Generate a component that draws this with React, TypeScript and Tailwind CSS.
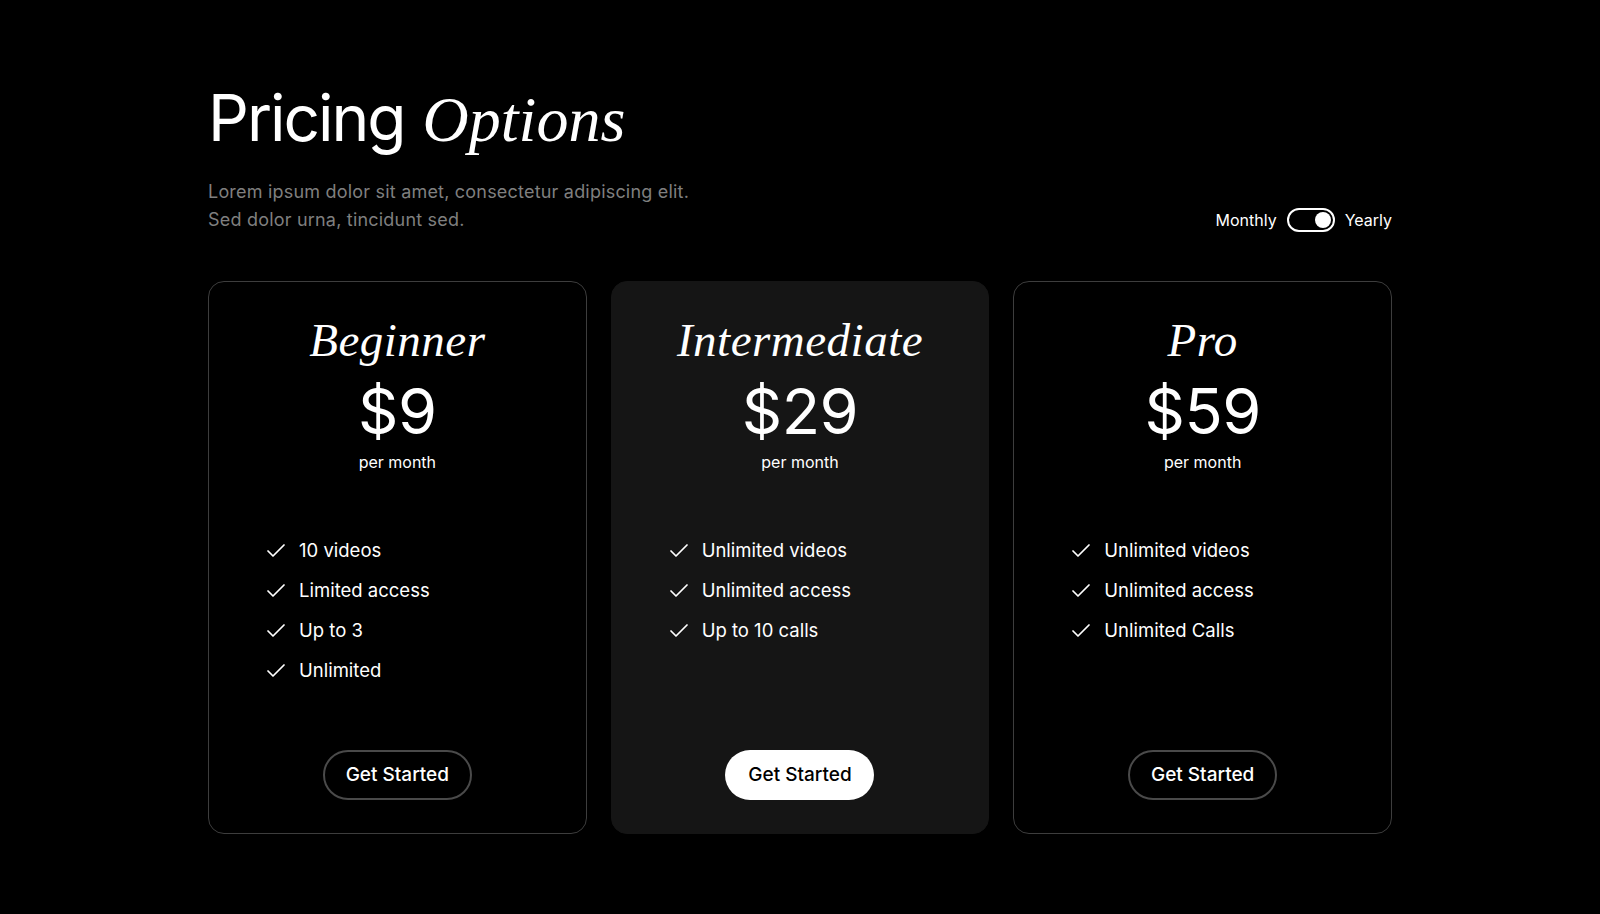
import { Check } from 'lucide-react';

type Plan = {
  name: string;
  price: string;
  features: string[];
  featured?: boolean;
};

const plans: Plan[] = [
  { name: 'Beginner', price: '$9', features: ['10 videos', 'Limited access', 'Up to 3', 'Unlimited'] },
  {
    name: 'Intermediate',
    price: '$29',
    features: ['Unlimited videos', 'Unlimited access', 'Up to 10 calls'],
    featured: true,
  },
  { name: 'Pro', price: '$59', features: ['Unlimited videos', 'Unlimited access', 'Unlimited Calls'] },
];

function BillingToggle() {
  return (
    <div className="flex items-center gap-[10px] text-[16px] text-white">
      <span>Monthly</span>
      <div className="w-[48px] h-[24px] rounded-full border-2 border-white flex items-center justify-end px-[2px]">
        <div className="w-[16px] h-[16px] rounded-full bg-white" />
      </div>
      <span>Yearly</span>
    </div>
  );
}

function PlanCard({ plan }: { plan: Plan }) {
  return (
    <div
      className={`h-[553px] rounded-2xl flex flex-col items-center pt-[35px] pb-[33px] border ${
        plan.featured ? 'bg-[#151515] border-[#151515]' : 'bg-black border-[#3d3d3d]'
      }`}
    >
      <h2 className="font-['Liberation_Serif',serif] italic text-[47px] leading-none tracking-[0.5px]">
        {plan.name}
      </h2>
      <div className="mt-[16px] text-[63px] leading-none tracking-[-0.5px]">{plan.price}</div>
      <div className="mt-[7px] text-[16px] leading-6">per month</div>

      <ul className="mt-[57px] w-full px-[55px]">
        {plan.features.map((f) => (
          <li key={f} className="h-[40px] flex items-center gap-[11px] text-[18.5px]">
            <Check className="w-[24px] h-[24px]" strokeWidth={1.75} />
            <span>{f}</span>
          </li>
        ))}
      </ul>

      <button
        className={`mt-auto w-[149px] h-[50px] rounded-full text-[19px] font-medium ${
          plan.featured ? 'bg-white text-black' : 'border-2 border-[#4a4a4a] text-white'
        }`}
      >
        Get Started
      </button>
    </div>
  );
}

export default function App() {
  return (
    <div className="min-h-screen bg-black text-white font-['Inter',sans-serif]">
      <div className="mx-auto w-[1184px] pt-[86px] pb-[80px]">
        {/* Header */}
        <div className="flex items-end justify-between">
          <div>
            <h1 className="text-[64px] leading-none">
              <span className="tracking-[-2px]">Pricing</span>{' '}
              <span className="font-['Liberation_Serif',serif] italic">Options</span>
            </h1>
            <p className="mt-[26px] text-[18px] leading-[28px] tracking-[0.2px] text-[#7f7f7f]">
              Lorem ipsum dolor sit amet, consectetur adipiscing elit.
              <br />
              Sed dolor urna, tincidunt sed.
            </p>
          </div>
          <div className="pb-[2px]">
            <BillingToggle />
          </div>
        </div>

        {/* Plans */}
        <div className="mt-[47px] grid grid-cols-3 gap-6">
          {plans.map((p) => (
            <PlanCard key={p.name} plan={p} />
          ))}
        </div>
      </div>
    </div>
  );
}
